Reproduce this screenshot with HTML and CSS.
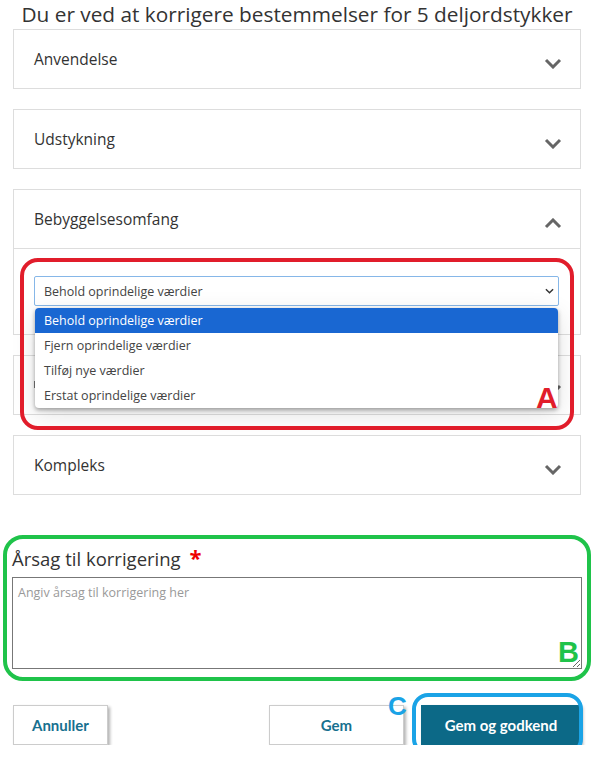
FILE: index.html
```html
<!DOCTYPE html>
<html lang="da">
<head>
<meta charset="UTF-8">
<meta name="viewport" content="width=device-width, initial-scale=1.0">
<title>Korrigér bestemmelser</title>
<link rel="stylesheet" href="styles.css">
</head>
<body>

<main class="page">
  <h1 class="title">Du er ved at korrigere bestemmelser for 5 deljordstykker</h1>

  <div class="panel">
    <div class="panel-head">
      <span>Anvendelse</span>
      <svg class="chev" viewBox="0 0 18 11"><path d="M2 2l7 7 7-7"/></svg>
    </div>
  </div>

  <div class="panel">
    <div class="panel-head">
      <span>Udstykning</span>
      <svg class="chev" viewBox="0 0 18 11"><path d="M2 2l7 7 7-7"/></svg>
    </div>
  </div>

  <div class="panel open">
    <div class="panel-head">
      <span>Bebyggelsesomfang</span>
      <svg class="chev" viewBox="0 0 18 11"><path d="M2 9l7-7 7 7"/></svg>
    </div>
    <div class="panel-body">
      <div class="select-wrap">
        <div class="select">
          <span>Behold oprindelige værdier</span>
          <svg class="select-arrow" viewBox="0 0 10 6"><path d="M1 1l4 4 4-4"/></svg>
        </div>
        <ul class="options">
          <li class="selected">Behold oprindelige værdier</li>
          <li>Fjern oprindelige værdier</li>
          <li>Tilføj nye værdier</li>
          <li>Erstat oprindelige værdier</li>
        </ul>
      </div>
      <div class="ring ring-red"></div>
      <div class="mark mark-a">A</div>
    </div>
  </div>

  <!-- hidden behind the open dropdown -->
  <div class="panel">
    <div class="panel-head">
      <span class="hidden-title"></span>
      <svg class="chev" viewBox="0 0 18 11"><path d="M2 2l7 7 7-7"/></svg>
    </div>
  </div>

  <div class="panel">
    <div class="panel-head">
      <span>Kompleks</span>
      <svg class="chev" viewBox="0 0 18 11"><path d="M2 2l7 7 7-7"/></svg>
    </div>
  </div>

  <section class="reason">
    <label class="reason-label" for="reason">Årsag til korrigering <span class="req">*</span></label>
    <div class="reason-field">
      <textarea id="reason" placeholder="Angiv årsag til korrigering her"></textarea>
      <div class="mark mark-b">B</div>
    </div>
  </section>

  <div class="actions">
    <button class="btn">Annuller</button>
    <div class="actions-right">
      <button class="btn btn-save">Gem</button>
      <div class="primary-wrap">
        <button class="btn btn-primary">Gem og godkend</button>
        <div class="ring ring-blue"></div>
        <div class="mark mark-c">C</div>
      </div>
    </div>
  </div>
</main>

</body>
</html>
```

FILE: styles.css
```css
body {
  margin: 0;
  font-family: "Open Sans", "Noto Sans", sans-serif;
  color: #333;
  background-color: #fff;
}
.page {
  padding: 0 13px;
}
.title {
  margin: 0;
  font-size: 20.8px;
  font-weight: 400;
  line-height: 28px;
  text-align: center;
  white-space: nowrap;
}
.panel {
  border: 1px solid #ddd;
  margin-top: 1px;
  margin-bottom: 20px;
  background-color: #fff;
}
.panel + .panel {
  margin-top: 0;
}
.panel-head {
  height: 58px;
  display: flex;
  align-items: center;
  justify-content: space-between;
  padding: 0 18px 0 20px;
  font-size: 15.5px;
}
.panel-head span {
  margin-top: -1px;
}
.hidden-title {
  width: 2px;
  height: 7px;
  margin-top: 4px;
  background-color: #777;
}
.chev {
  width: 18px;
  height: 11px;
  margin-top: 8px;
  fill: none;
  stroke: #666;
  stroke-width: 3;
}
.panel.open {
  position: relative;
  z-index: 2;
}
.panel-body {
  position: relative;
  border-top: 1px solid #ddd;
  padding: 27px 21px 28px 20px;
}
.select-wrap {
  position: relative;
}
.select {
  height: 28px;
  border: 1px solid #86b7e8;
  border-radius: 2px;
  display: flex;
  align-items: center;
  justify-content: space-between;
  padding: 0 4px 0 9px;
  font-size: 12.5px;
  color: #444;
  background-color: #fff;
}
.select-arrow {
  width: 9px;
  height: 6px;
  fill: none;
  stroke: #333;
  stroke-width: 1.6;
}
.options {
  position: absolute;
  left: 1px;
  right: 1px;
  top: 32px;
  margin: 0;
  padding: 0;
  list-style: none;
  background-color: #fff;
  border-radius: 4px;
  box-shadow: 0 2px 4px rgba(0, 0, 0, 0.35), 0 6px 24px rgba(0, 0, 0, 0.12);
  overflow: hidden;
  font-size: 12.5px;
  color: #444;
}
.options li {
  height: 25px;
  line-height: 25px;
  padding-left: 9px;
}
.options li.selected {
  background-color: #1967d2;
  color: #fff;
}
.ring {
  position: absolute;
  border-radius: 18px;
  pointer-events: none;
}
.ring-red {
  left: 6px;
  top: 9px;
  width: 546px;
  height: 164px;
  border: 4px solid #e11d2b;
  z-index: 3;
}
.mark {
  position: absolute;
  font-family: "Liberation Sans", Arial, sans-serif;
  font-weight: 700;
  z-index: 4;
}
.mark-a {
  left: 522px;
  top: 132px;
  font-size: 30px;
  color: #e11d2b;
}
.reason {
  margin: 40px -10px 0 -10px;
  border: 4px solid #1fc34a;
  border-radius: 20px;
  padding: 5px 5px 8px 5px;
}
.reason-label {
  display: block;
  font-size: 18.5px;
  line-height: 26px;
  padding-bottom: 5px;
}
.req {
  color: #e00;
  font-weight: 700;
  font-size: 22px;
  margin-left: 4px;
}
.reason-field {
  position: relative;
}
.reason-field textarea {
  display: block;
  box-sizing: border-box;
  width: 100%;
  height: 92px;
  border: 1px solid #777;
  padding: 6px 5px;
  font-family: "Open Sans", "Noto Sans", sans-serif;
  font-size: 12.5px;
  color: #333;
}
.reason-field textarea::placeholder {
  color: #999;
}
.mark-b {
  right: 3px;
  bottom: 0;
  font-size: 29px;
  color: #1fc34a;
}
.actions {
  display: flex;
  justify-content: space-between;
  margin-top: 24px;
}
.actions-right {
  display: flex;
  gap: 17px;
}
.btn {
  height: 40px;
  font-family: "Lato", "Open Sans", sans-serif;
  font-weight: 700;
  font-size: 15px;
  color: #17708f;
  background-color: #fff;
  border: 1px solid #ccc;
  box-shadow: 2px 2px 3px rgba(0, 0, 0, 0.3);
  padding: 0 18px;
  cursor: pointer;
}
.btn-save {
  width: 135px;
}
.primary-wrap {
  position: relative;
}
.btn-primary {
  width: 160px;
  color: #fff;
  background-color: #0c6987;
  border-color: #0c6987;
}
.ring-blue {
  left: -9px;
  top: -12px;
  right: -2px;
  bottom: -10px;
  border: 4px solid #1aa3e6;
  border-radius: 16px;
}
.mark-c {
  left: -33px;
  top: -14px;
  font-size: 26px;
  color: #1aa3e6;
}
```
